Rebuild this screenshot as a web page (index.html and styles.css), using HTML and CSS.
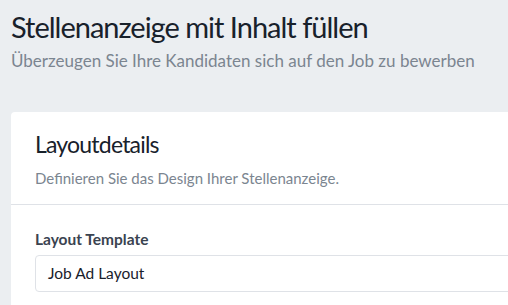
FILE: index.html
```html
<!DOCTYPE html>
<html lang="de">
<head>
    <meta charset="UTF-8">
    <title>Stellenanzeige</title>
    <link rel="stylesheet" href="styles.css">
</head>
<body>

<div class="page">
    <div class="page-header">
        <h1>Stellenanzeige mit Inhalt füllen</h1>
        <p>Überzeugen Sie Ihre Kandidaten sich auf den Job zu bewerben</p>
    </div>

    <div class="card">
        <div class="card-header">
            <h2>Layoutdetails</h2>
            <p>Definieren Sie das Design Ihrer Stellenanzeige.</p>
        </div>
        <div class="card-body">
            <label for="template">Layout Template</label>
            <div class="select-box" id="template">Job Ad Layout</div>
        </div>
    </div>
</div>

</body>
</html>
```

FILE: styles.css
```css
body {
    margin: 0;
    font-family: Lato, "Liberation Sans", sans-serif;
    background-color: #ebeef1;
    overflow: hidden;
    height: 305px;
}
.page {
    padding: 9px 0 0 11px;
}
.page-header h1 {
    margin: 0;
    font-size: 29px;
    font-weight: 400;
    letter-spacing: -1px;
    line-height: 36px;
    color: #18212b;
}
.page-header p {
    margin: 5px 0 0;
    font-size: 17px;
    line-height: 22px;
    color: #7b8590;
}
.card {
    margin-top: 40px;
    margin-right: -40px;
    background: white;
    border-radius: 4px;
}
.card-header {
    padding: 16px 24px 16px;
    border-bottom: 1px solid #dfe2e7;
}
.card-header h2 {
    margin: 0;
    font-size: 23px;
    font-weight: 400;
    letter-spacing: -0.8px;
    line-height: 32px;
    color: #18212b;
}
.card-header p {
    margin: 8px 0 0;
    font-size: 15px;
    line-height: 20px;
    color: #7b8590;
}
.card-body {
    padding: 24px 24px 20px;
}
.card-body label {
    display: block;
    font-size: 15.5px;
    font-weight: 700;
    line-height: 20px;
    color: #3a4350;
    margin-bottom: 6px;
}
.select-box {
    height: 35px;
    line-height: 35px;
    padding: 0 12px;
    border: 1px solid #dfe2e7;
    border-radius: 4px;
    font-size: 15.5px;
    color: #18212b;
}
```
